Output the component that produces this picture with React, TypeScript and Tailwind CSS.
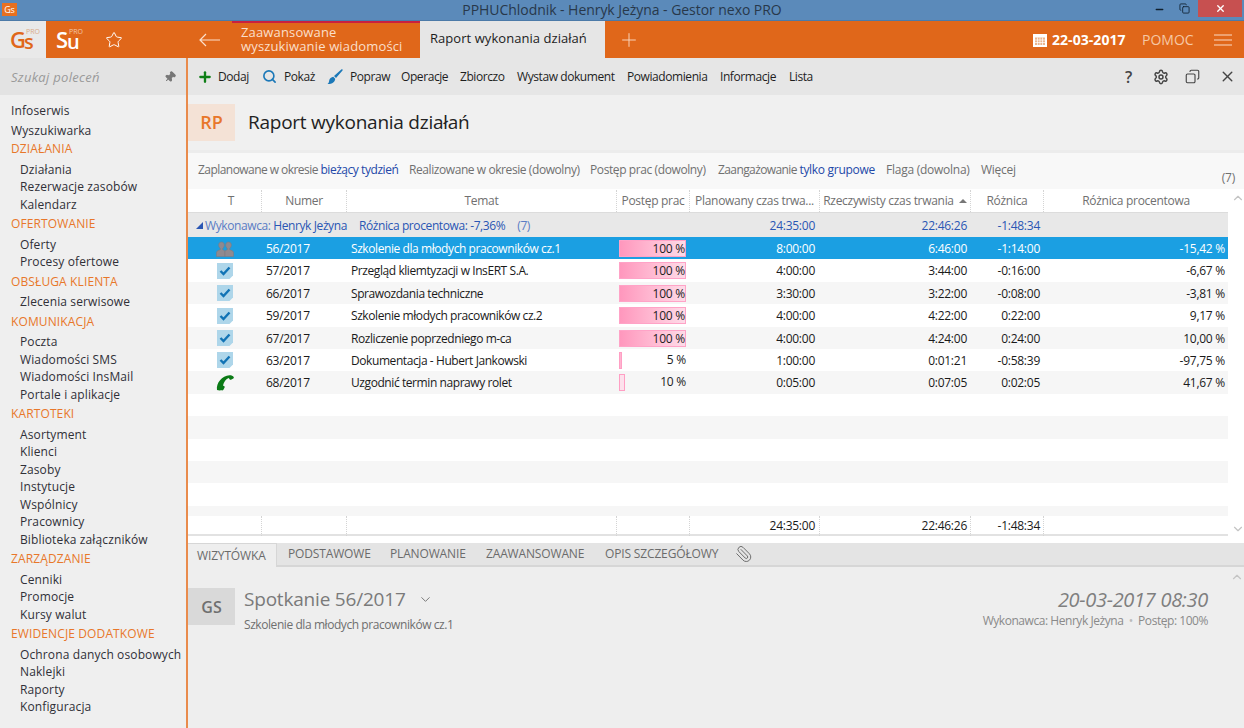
import React from 'react';
import { Plus, Search, Star, Pin, Settings, X, Copy, Paperclip, ChevronDown, ChevronUp, Minus } from 'lucide-react';

const menu: { head?: string; items: string[] }[] = [
  { head: 'DZIAŁANIA', items: ['Działania', 'Rezerwacje zasobów', 'Kalendarz'] },
  { head: 'OFERTOWANIE', items: ['Oferty', 'Procesy ofertowe'] },
  { head: 'OBSŁUGA KLIENTA', items: ['Zlecenia serwisowe'] },
  { head: 'KOMUNIKACJA', items: ['Poczta', 'Wiadomości SMS', 'Wiadomości InsMail', 'Portale i aplikacje'] },
  { head: 'KARTOTEKI', items: ['Asortyment', 'Klienci', 'Zasoby', 'Instytucje', 'Wspólnicy', 'Pracownicy', 'Biblioteka załączników'] },
  { head: 'ZARZĄDZANIE', items: ['Cenniki', 'Promocje', 'Kursy walut'] },
  { head: 'EWIDENCJE DODATKOWE', items: ['Ochrona danych osobowych', 'Naklejki', 'Raporty', 'Konfiguracja'] },
];

const rows = [
  { icon: 'group', nr: '56/2017', temat: 'Szkolenie dla młodych pracowników cz.1', pct: 100, plan: '8:00:00', real: '6:46:00', diff: '-1:14:00', proc: '-15,42 %' },
  { icon: 'check', nr: '57/2017', temat: 'Przegląd kliemtyzacji w InsERT S.A.', pct: 100, plan: '4:00:00', real: '3:44:00', diff: '-0:16:00', proc: '-6,67 %' },
  { icon: 'check', nr: '66/2017', temat: 'Sprawozdania techniczne', pct: 100, plan: '3:30:00', real: '3:22:00', diff: '-0:08:00', proc: '-3,81 %' },
  { icon: 'check', nr: '59/2017', temat: 'Szkolenie młodych pracowników cz.2', pct: 100, plan: '4:00:00', real: '4:22:00', diff: '0:22:00', proc: '9,17 %' },
  { icon: 'check', nr: '67/2017', temat: 'Rozliczenie poprzedniego m-ca', pct: 100, plan: '4:00:00', real: '4:24:00', diff: '0:24:00', proc: '10,00 %' },
  { icon: 'check', nr: '63/2017', temat: 'Dokumentacja - Hubert Jankowski', pct: 5, plan: '1:00:00', real: '0:01:21', diff: '-0:58:39', proc: '-97,75 %' },
  { icon: 'phone', nr: '68/2017', temat: 'Uzgodnić termin naprawy rolet', pct: 10, plan: '0:05:00', real: '0:07:05', diff: '0:02:05', proc: '41,67 %' },
];

function CheckIcon() {
  return (
    <svg width="16" height="16" viewBox="0 0 16 16">
      <path d="M0 0h16v12.500L12.500 16H0z" fill="#aed6ea" />
      <path d="M3.500 8l3 3 6-6.500" fill="none" stroke="#1173b5" strokeWidth="2.400" />
    </svg>
  );
}

function GroupIcon() {
  return (
    <svg width="18" height="16" viewBox="0 0 18 16" fill="#8f8a90" stroke="#7d7a82" strokeWidth=".6">
      <path d="M5.500 1c1.800 0 2.800 1.300 2.800 3 0 1.500-.7 2.800-1.600 3.400v1.200L9 10v5.500H.5V11c0-.7 2.800-2 3.800-2.400V7.400C3.400 6.800 2.700 5.500 2.700 4c0-1.700 1-3 2.800-3z" />
      <path d="M12.500 1c1.800 0 2.800 1.300 2.800 3 0 1.500-.7 2.800-1.600 3.400v1.200c1 .4 3.800 1.700 3.800 2.400v4.500H9V10l2.300-1.400V7.400c-.9-.6-1.600-1.900-1.600-3.400 0-1.700 1-3 2.800-3z" />
    </svg>
  );
}

function PhoneIcon() {
  return (
    <svg width="18" height="16" viewBox="0 0 18 16" fill="#0b7a16">
      <path d="M1 15C0 8 6 .8 13.500.3c1.500-.1 3.500.5 4.200 1.700.3.600.1 1.200-.4 1.500l-2.300 1.200c-.6.300-1.100.1-1.400-.4l-.8-1.200C10 4 7.800 7 7 10.500l1.300.7c.5.300.6.800.3 1.400l-1.200 2.100c-.4.600-.9.800-1.500.6C4.500 15.400 2.500 15.600 1 15z" />
    </svg>
  );
}

function BrushIcon() {
  return (
    <svg width="16" height="16" viewBox="0 0 16 16" fill="#1b78b8">
      <path d="M15.500.5c.3.300.3.800 0 1.100L9 8.900 7 7 14.300.5c.4-.3.900-.3 1.200 0z" />
      <path d="M6.300 7.800l1.900 1.900c0 3-2.700 5.300-7.700 5.300 1.300-1 1.500-2 1.700-3.500.3-2 2.200-3.500 4.100-3.700z" />
    </svg>
  );
}

function CalendarIcon() {
  return (
    <svg width="14" height="14" viewBox="0 0 14 14">
      <path d="M0 1h14v13H0z" fill="#fff" />
      <path d="M2 4.500h10v7.500H2z" fill="#eab48d" />
      <path d="M4.500 4.500V12M7 4.500V12M9.500 4.500V12M2 7h10M2 9.500h10" stroke="#fff" strokeWidth=".7" />
    </svg>
  );
}

function ProgressCell({ pct, selected }: { pct: number; selected: boolean }) {
  return (
    <div className="h-full flex items-center pl-[2px]">
      <div className={`relative h-[17px] w-[67px] text-[#222] ${pct === 100 ? 'border border-[#ffa3c7]' : ''} ${selected ? 'border-[#d9e9f5]' : ''}`}>
        {pct === 100 ? (
          <div className="h-full w-full bg-gradient-to-r from-[#ff97bd] to-[#fddbe8]" />
        ) : (
          <div className={`h-full border border-[#ff9fc4] ${pct === 5 ? 'w-[3px] bg-[#ffb4d0]' : 'w-[6px] bg-[#fde1ec]'}`} />
        )}
        <span className="absolute right-[0px] top-0 leading-[15px]">{pct} %</span>
      </div>
    </div>
  );
}

function Row({ r, i }: { r: (typeof rows)[number]; i: number }) {
  const selected = i === 0;
  const bg = selected ? 'bg-[#1b9fe2] text-white' : i % 2 === 1 ? 'bg-white text-[#1a1a1a]' : 'bg-[#f6f6f6] text-[#1a1a1a]';
  return (
    <div className={`grid grid-cols-[74px_85px_270px_73px_130px_151px_73px_184px] h-[22.400px] shrink-0 leading-[23px] ${bg}`}>
      <div className="flex items-center justify-center -ml-[1px]">
        {r.icon === 'check' && <CheckIcon />}
        {r.icon === 'group' && <GroupIcon />}
        {r.icon === 'phone' && <PhoneIcon />}
      </div>
      <div className="pl-[4px]">{r.nr}</div>
      <div className="pl-[4px] truncate tracking-[-0.42px]">{r.temat}</div>
      <ProgressCell pct={r.pct} selected={selected} />
      <div className="text-right pr-[5px]">{r.plan}</div>
      <div className="text-right pr-[4px]">{r.real}</div>
      <div className="text-right pr-[4px]">{r.diff}</div>
      <div className="text-right pr-[3px]">{r.proc}</div>
    </div>
  );
}

const headCell = 'flex items-center justify-center border-r border-dotted border-[#d4d4d4] truncate';
const footCell = 'border-r border-dotted border-[#d4d4d4]';

export default function App() {
  return (
    <div className="w-[1244px] h-[728px] overflow-hidden flex flex-col font-['Open_Sans','Liberation_Sans',sans-serif] text-[12px] tracking-[-0.25px] text-[#2a2a2a] bg-[#eeeeee]">
      {/* title bar */}
      <div className="relative h-[21px] shrink-0 bg-[#5b8aba] border-b border-[#4c7aa8] flex items-center justify-center">
        <div className="absolute left-[2px] top-[3px] w-[15px] h-[13px] bg-[#e8701f] text-white text-[9px] leading-[13px] text-center">Gs</div>
        <span className="text-[14px] tracking-[-0.05px] text-[#28384a] mb-[1px]">PPHUChlodnik - Henryk Jeżyna - Gestor nexo PRO</span>
        <div className="absolute right-[2px] top-0 h-[17px] flex items-center text-[#10202e]">
          <Minus size={11} strokeWidth={3} className="mr-[14px] mt-[2px]" />
          <Copy size={11} strokeWidth={1.8} className="mr-[8px]" />
          <div className="w-[44px] h-[17px] bg-[#c75050] flex items-center justify-center">
            <X size={11} strokeWidth={3} className="text-white" />
          </div>
        </div>
      </div>

      {/* orange header */}
      <div className="h-[37px] shrink-0 bg-[#e0671a] flex items-stretch text-white">
        <div className="w-[46px] bg-[#e9e9e9] relative text-[#e0671a] font-semibold">
          <span className="absolute left-[10px] top-[10px] text-[22px] leading-[16px]">G</span>
          <span className="absolute left-[24px] top-[15px] text-[20px] leading-[11px]">s</span>
          <span className="absolute left-[26px] top-[8px] text-[7px] leading-[6px] tracking-[0px] font-normal text-[#d9a988]">PRO</span>
        </div>
        <div className="w-[49px] relative font-semibold">
          <span className="absolute left-[10px] top-[10px] text-[22px] leading-[16px]">S</span>
          <span className="absolute left-[21px] top-[15px] text-[20px] leading-[11px]">u</span>
          <span className="absolute left-[23px] top-[8px] text-[7px] leading-[6px] tracking-[0px] font-normal text-[#f3c8aa]">PRO</span>
        </div>
        <div className="w-[104px] flex items-center pl-[10px]">
          <Star size={18} strokeWidth={1.3} />
        </div>
        <div className="w-[33px] flex items-center">
          <svg width="21" height="14" viewBox="0 0 21 14" fill="none" stroke="#fbe0cc" strokeWidth="1.200"><path d="M21 7H1M7 1L1 7l6 6" /></svg>
        </div>
        <div className="w-[188px] border-t-[3px] border-[#c9203f] pl-[9px] text-[13px] leading-[14px] tracking-[0.15px] text-[#fbdfca] font-medium -mt-[1px] pt-[2px]">
          Zaawansowane
          <br />
          wyszukiwanie wiadomości
        </div>
        <div className="w-[185px] bg-[#e6e6e6] text-[#1c1c1c] text-[13px] tracking-[0.05px] font-medium flex items-center pl-[10px] -mt-[1px]">Raport wykonania działań</div>
        <div className="flex items-center pl-[13px]">
          <Plus size={22} strokeWidth={1} className="text-[#fbdcc5]" />
        </div>
        <div className="ml-auto flex items-center">
          <CalendarIcon />
          <span className="ml-[5px] w-[90px] text-[14px] tracking-[0.05px] font-bold">22-03-2017</span>
          <span className="w-[72px] text-[14px] tracking-[0px] text-[#f6c7a5]">POMOC</span>
          <svg width="18" height="12" viewBox="0 0 18 12" stroke="#fbdcc5" strokeWidth="1" className="mr-[12px]"><path d="M0 1h18M0 6h18M0 11h18" /></svg>
        </div>
      </div>

      <div className="flex-1 flex min-h-0">
        {/* sidebar */}
        <div className="w-[188px] shrink-0 border-r-2 border-[#e98b4c] bg-[#efefef] flex flex-col">
          <div className="h-[37px] shrink-0 bg-[#e3e3e3] flex items-center justify-between pl-[11px] pr-[10px] italic text-[13px] tracking-[0.3px] text-[#9a9a9a]">
            <span className="mt-[2px]">Szukaj poleceń</span>
            <Pin size={12} className="text-[#777] rotate-45 fill-[#777]" />
          </div>
          <div className="pl-[11px] pt-[4.500px] text-[#303038] tracking-[0.12px]">
            <div className="h-[20px] leading-[21px]">Infoserwis</div>
            <div className="h-[18.750px] leading-[21px]">Wyszukiwarka</div>
            {menu.map((m) => (
              <div key={m.head}>
                <div className="h-[22.500px] leading-[22px] text-[#e8772a]">{m.head}</div>
                {m.items.map((it) => (
                  <div key={it} className="h-[17.500px] leading-[17px] pl-[9px] whitespace-nowrap">{it}</div>
                ))}
              </div>
            ))}
          </div>
        </div>

        {/* main */}
        <div className="flex-1 flex flex-col min-w-0">
          <div className="h-[37px] shrink-0 bg-[#e6e6e6] flex items-center text-[#1e1e1e] pl-[9px] tracking-[-0.42px]">
            <div className="w-[65px] flex items-center gap-[5px]"><Plus size={16} strokeWidth={3.500} className="text-[#0f7f17]" />Dodaj</div>
            <div className="w-[65px] flex items-center gap-[7px]"><Search size={15} strokeWidth={2.600} className="text-[#1b78b8]" />Pokaż</div>
            <div className="w-[74px] flex items-center gap-[7px]"><BrushIcon />Popraw</div>
            <div className="w-[59px]">Operacje</div>
            <div className="w-[57px]">Zbiorczo</div>
            <div className="w-[110px]">Wystaw dokument</div>
            <div className="w-[93px]">Powiadomienia</div>
            <div className="w-[69px]">Informacje</div>
            <div>Lista</div>
            <div className="ml-auto flex items-center text-[#444]">
              <span className="w-[28px] text-[16px] font-semibold">?</span>
              <Settings size={16} strokeWidth={2.200} className="mr-[16px]" />
              <Copy size={15} strokeWidth={1.800} className="mr-[19px] -scale-x-100" />
              <X size={17} strokeWidth={2} className="mr-[8px]" />
            </div>
          </div>

          <div className="h-[55px] shrink-0 bg-[#f0f0f0] flex items-center">
            <div className="w-[47px] h-[37px] bg-[#f4e2d6] flex items-center justify-center text-[#e8772a] text-[18px] tracking-[0px] font-semibold">RP</div>
            <div className="ml-[13px] text-[19px] tracking-[-0.25px] text-[#222] -mt-[1px]">Raport wykonania działań</div>
          </div>

          <div className="h-[39px] shrink-0 bg-[#f8f8f8] border-t-[3px] border-[#ececec] relative flex items-center pl-[10px] pb-[2px] text-[#707070]">
            <div className="w-[211px] tracking-[-0.55px]">Zaplanowane w okresie <span className="text-[#2348a8] tracking-[-0.45px]">bieżący tydzień</span></div>
            <div className="w-[181px] tracking-[-0.42px]">Realizowane w okresie (dowolny)</div>
            <div className="w-[128px] tracking-[-0.4px]">Postęp prac (dowolny)</div>
            <div className="w-[168px] tracking-[-0.6px]">Zaangażowanie <span className="text-[#2348a8] tracking-[-0.3px]">tylko grupowe</span></div>
            <div className="w-[95px]">Flaga (dowolna)</div>
            <div>Więcej</div>
            <span className="absolute right-[9px] top-[16px] text-[#707070]">(7)</span>
          </div>

          {/* table */}
          <div className="h-[354px] shrink-0 flex bg-white">
            <div className="w-[1040px] shrink-0 flex flex-col">
              <div className="grid grid-cols-[74px_85px_270px_73px_130px_151px_73px_184px] h-[24px] shrink-0 bg-white border-b border-[#dcdcdc] text-[#707070] tracking-[-0.3px] pt-[1px]">
                <div className={`${headCell} pl-[13px]`}>T</div>
                <div className={headCell}>Numer</div>
                <div className={headCell}>Temat</div>
                <div className={headCell}>Postęp prac</div>
                <div className={headCell}>Planowany czas trwa...</div>
                <div className={headCell}>
                  Rzeczywisty czas trwania
                  <svg width="8" height="4" viewBox="0 0 8 4" className="ml-[5px]"><path d="M0 4L4 0l4 4z" fill="#777" /></svg>
                </div>
                <div className={headCell}>Różnica</div>
                <div className="flex items-center justify-center">Różnica procentowa</div>
              </div>
              <div className="grid grid-cols-[159px_270px_73px_130px_151px_73px_184px] h-[24px] shrink-0 leading-[25px] bg-[#e8e8e8] text-[#2a56b4]">
                <div className="col-span-3 flex items-center pl-[8px] whitespace-nowrap tracking-[-0.4px]">
                  <svg width="7" height="7" viewBox="0 0 7 7" className="mr-[2px]"><path d="M7 0v7H0z" fill="#2a56b4" /></svg>
                  <span><span className="text-[#5a7cc4]">Wykonawca:</span> Henryk Jeżyna</span>
                  <span className="ml-[12px]">Różnica procentowa: -7,36%</span>
                  <span className="ml-[12px] text-[#5a7cc4]">(7)</span>
                </div>
                <div className="text-right pr-[5px]">24:35:00</div>
                <div className="text-right pr-[4px]">22:46:26</div>
                <div className="text-right pr-[4px]">-1:48:34</div>
                <div />
              </div>
              {rows.map((r, i) => (
                <Row key={r.nr} r={r} i={i} />
              ))}
              <div className="h-[22.400px] shrink-0 bg-white" />
              <div className="h-[22.400px] shrink-0 bg-[#f6f6f6]" />
              <div className="h-[22.400px] shrink-0 bg-white" />
              <div className="h-[22.400px] shrink-0 bg-[#f6f6f6]" />
              <div className="h-[22.400px] shrink-0 bg-white" />
              <div className="h-[10.200px] shrink-0 bg-[#f6f6f6]" />
              <div className="grid grid-cols-[74px_85px_270px_73px_130px_151px_73px_184px] h-[20px] shrink-0 bg-white border-b-2 border-[#e2e2e2] leading-[20px] text-[#1a1a1a]">
                <div className={footCell} />
                <div className={footCell} />
                <div className={footCell} />
                <div className={footCell} />
                <div className={`${footCell} text-right pr-[4px]`}>24:35:00</div>
                <div className={`${footCell} text-right pr-[3px]`}>22:46:26</div>
                <div className={`${footCell} text-right pr-[3px]`}>-1:48:34</div>
                <div />
              </div>
            </div>
            <div className="flex-1 flex flex-col items-center text-[#c4c4c4] pt-[2px] pl-[3px]">
              <ChevronUp size={14} />
              <ChevronDown size={14} className="mt-[317px]" />
            </div>
          </div>

          {/* tabs */}
          <div className="h-[24px] shrink-0 bg-[#e4e4e4] border-b-2 border-[#d6d6d6] flex items-stretch text-[#6b6b6b] uppercase tracking-[-0.15px]">
            <div className="w-[89px] bg-[#eeeeee] h-[24px] border-r border-t border-[#d6d6d6] flex items-center pl-[9px]">Wizytówka</div>
            <div className="w-[102px] ml-[11px] flex items-center">Podstawowe</div>
            <div className="w-[96px] flex items-center">Planowanie</div>
            <div className="w-[119px] flex items-center">Zaawansowane</div>
            <div className="w-[130px] flex items-center">Opis szczegółowy</div>
            <div className="flex items-center"><Paperclip size={18} strokeWidth={1.300} className="-scale-x-100" /></div>
          </div>

          {/* card */}
          <div className="flex-1 min-h-0 bg-[#eeeeee] relative flex pt-[21px] pr-[36px] text-[#808080]">
            <div className="w-[47px] h-[37px] bg-[#d9d9d9] flex items-center justify-center text-[#6f6f6f] text-[16px] tracking-[0px] font-semibold">GS</div>
            <div className="ml-[9px] -mt-[3px]">
              <div className="flex items-center text-[19px] leading-[28px] tracking-[-0.2px] text-[#7a7a7a]">
                Spotkanie 56/2017
                <ChevronDown size={15} strokeWidth={1.600} className="ml-[12px]" />
              </div>
              <div className="mt-[5px] leading-[14px] tracking-[-0.43px] text-[#6f6f6f]">Szkolenie dla młodych pracowników cz.1</div>
            </div>
            <div className="ml-auto text-right -mt-[1px]">
              <div className="text-[20px] leading-[25px] tracking-[-0.3px] italic text-[#7f7f7f]">20-03-2017 08:30</div>
              <div className="mt-[1px] leading-[16px] tracking-[-0.45px] text-[#8a8a8a]">Wykonawca: Henryk Jeżyna &nbsp;<span className="text-[#bbb]">•</span>&nbsp; Postęp: 100%</div>
            </div>
            <ChevronUp size={14} className="absolute right-[0px] top-[3px] text-[#c4c4c4]" />
          </div>
        </div>
      </div>
    </div>
  );
}
